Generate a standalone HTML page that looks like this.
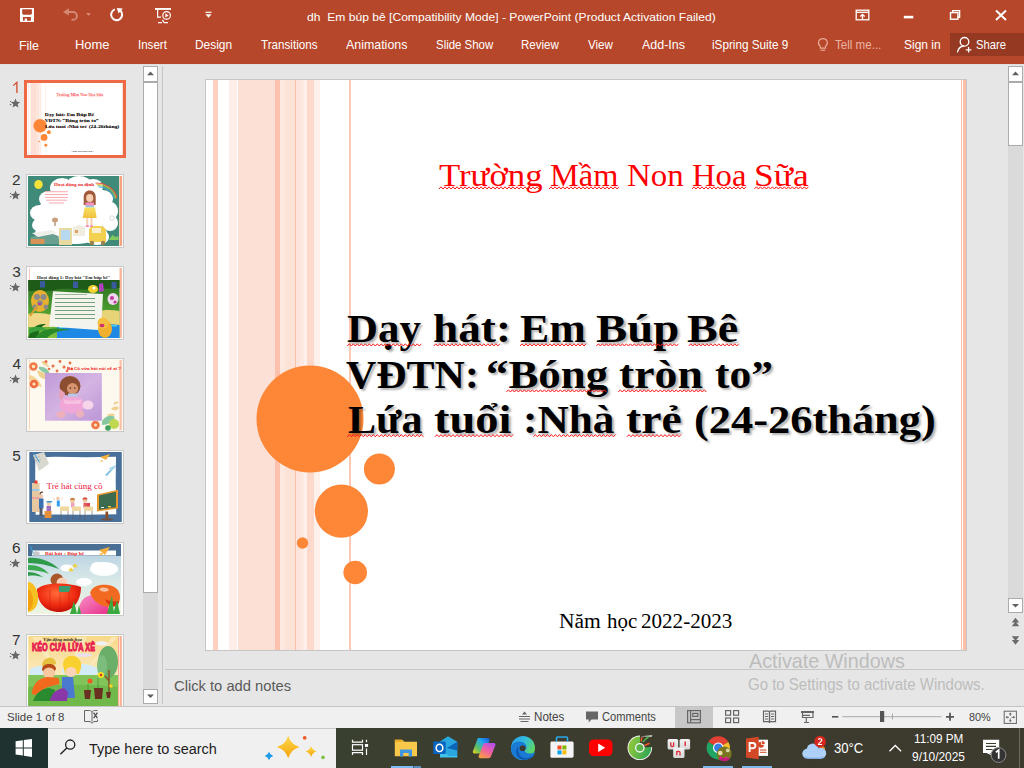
<!DOCTYPE html>
<html><head><meta charset="utf-8">
<style>
*{margin:0;padding:0;box-sizing:border-box}
html,body{width:1024px;height:768px;overflow:hidden;background:#e6e6e6;font-family:"Liberation Sans",sans-serif;position:relative}
.a{position:absolute}
.tx{white-space:nowrap}
</style></head><body>
<div class="a" style="left:0px;top:0px;width:1024px;height:64px;background:#b7472a;"></div>
<div class="a" style="left:950px;top:33px;width:74px;height:23px;background:#963922;"></div>
<div class="a" style="left:0px;top:64px;width:1024px;height:1px;background:#dde1e3;"></div>
<svg class="a" style="left:0;top:0" width="1024" height="64">
<rect x="20" y="7.9" width="14" height="14" rx="0.6" fill="#fff"/>
<path d="M22.2 9.2h9.7v4.3l-1.1 1.2h-7.5l-1.1-1.2z" fill="#b7472a"/>
<path d="M23 17h7.9v3.8h-3.9v-2.2h-2.3v2.2h-1.7z" fill="#b7472a"/>
<g fill="none" stroke="#d38a74" stroke-width="2">
 <path d="M65.5 12h7.5a3.9 3.9 0 0 1 0 7.8h-1.5"/>
</g>
<path d="M63 12l5.9-3.7v7.3z" fill="#d38a74"/>
<path d="M86 13h5l-2.5 3z" fill="#d8866f"/>
<path d="M114.9 9.4A5.5 5.5 0 1 0 120.6 10.8" fill="none" stroke="#fff" stroke-width="2"/>
<path d="M116.8 8.1l6 0.5-4.3 5z" fill="#fff"/>
<rect x="155" y="8" width="16" height="1.9" fill="#fff"/>
<g fill="none" stroke="#fff" stroke-width="1.2">
 <path d="M157.6 9.5v7.6h3.4"/>
 <circle cx="166.6" cy="15.4" r="3.8"/>
 <path d="M158 22.6h4M164 22.6h4"/>
 <path d="M162.5 19.8l1.5 2.8"/>
</g>
<path d="M165.4 13.2v4.4l3.2-2.2z" fill="#fff"/>
<path d="M205.5 12.3h6" stroke="#fff" stroke-width="1.2"/>
<path d="M205.5 14.3h6l-3 3.5z" fill="#fff"/>
<g fill="none" stroke="#fff" stroke-width="1.3">
 <rect x="856.2" y="10.2" width="12.6" height="9.6"/>
 <path d="M856 12.3h13"/>
 <path d="M862.5 19.8v-5.5M860.3 16.5l2.2-2.2 2.2 2.2"/>
</g>
<rect x="903.8" y="15.8" width="9.5" height="2.6" fill="#fff"/>
<g fill="none" stroke="#fff" stroke-width="1.4">
 <rect x="950.5" y="12.6" width="7.4" height="6.6"/>
 <path d="M952.6 12.6v-2h7v6.6h-2"/>
</g>
<path d="M996 10.5l10 9.5M1006 10.5l-10 9.5" stroke="#fff" stroke-width="2"/>
<g fill="none" stroke="#e9a996" stroke-width="1.2">
 <path d="M820.3 46.3c-2.7-2-2.6-7.6 2.6-7.6s5.3 5.6 2.6 7.6v1.8h-5.2z"/>
 <path d="M820.6 50.2h4.6"/>
</g>
<g fill="none" stroke="#fff" stroke-width="1.3">
 <circle cx="964.5" cy="41.8" r="4.3"/>
 <path d="M957.4 52.4c0.8-4.2 3.4-6.2 6.4-6.4"/>
 <path d="M968.6 47v5.6M965.8 49.8h5.6"/>
</g>
</svg>
<div class="a tx" style="left:306.62px;top:10.06px;font-family:'Liberation Sans';font-size:11.38px;line-height:14px;color:#fff;transform:scaleX(1.0633);transform-origin:0 0;">dh  Em búp bê [Compatibility Mode] - PowerPoint (Product Activation Failed)</div>
<div class="a tx" style="left:74.99px;top:38.36px;font-family:'Liberation Sans';font-size:12.52px;line-height:15px;color:#fff;transform:scaleX(1.0345);transform-origin:0 0;">Home</div>
<div class="a tx" style="left:137.60px;top:38.36px;font-family:'Liberation Sans';font-size:12.52px;line-height:15px;color:#fff;transform:scaleX(0.9221);transform-origin:0 0;">Insert</div>
<div class="a tx" style="left:195.07px;top:38.36px;font-family:'Liberation Sans';font-size:12.52px;line-height:15px;color:#fff;transform:scaleX(0.9523);transform-origin:0 0;">Design</div>
<div class="a tx" style="left:260.82px;top:38.36px;font-family:'Liberation Sans';font-size:12.52px;line-height:15px;color:#fff;transform:scaleX(0.9309);transform-origin:0 0;">Transitions</div>
<div class="a tx" style="left:346.00px;top:38.36px;font-family:'Liberation Sans';font-size:12.52px;line-height:15px;color:#fff;transform:scaleX(0.9915);transform-origin:0 0;">Animations</div>
<div class="a tx" style="left:435.64px;top:38.36px;font-family:'Liberation Sans';font-size:12.52px;line-height:15px;color:#fff;transform:scaleX(0.9138);transform-origin:0 0;">Slide Show</div>
<div class="a tx" style="left:521.10px;top:38.36px;font-family:'Liberation Sans';font-size:12.52px;line-height:15px;color:#fff;transform:scaleX(0.9201);transform-origin:0 0;">Review</div>
<div class="a tx" style="left:588.00px;top:38.36px;font-family:'Liberation Sans';font-size:12.52px;line-height:15px;color:#fff;transform:scaleX(0.9241);transform-origin:0 0;">View</div>
<div class="a tx" style="left:642.00px;top:38.36px;font-family:'Liberation Sans';font-size:12.52px;line-height:15px;color:#fff;transform:scaleX(0.9944);transform-origin:0 0;">Add-Ins</div>
<div class="a tx" style="left:712.27px;top:38.36px;font-family:'Liberation Sans';font-size:12.52px;line-height:15px;color:#fff;transform:scaleX(0.9362);transform-origin:0 0;">iSpring Suite 9</div>
<div class="a tx" style="left:903.63px;top:38.36px;font-family:'Liberation Sans';font-size:12.52px;line-height:15px;color:#fff;transform:scaleX(0.9577);transform-origin:0 0;">Sign in</div>
<div class="a tx" style="left:975.75px;top:38.36px;font-family:'Liberation Sans';font-size:12.52px;line-height:15px;color:#fff;transform:scaleX(0.9016);transform-origin:0 0;">Share</div>
<div class="a tx" style="left:19.03px;top:39.16px;font-family:'Liberation Sans';font-size:12.52px;line-height:15px;color:#fff;transform:scaleX(0.9903);transform-origin:0 0;">File</div>
<div class="a tx" style="left:835.32px;top:38.36px;font-family:'Liberation Sans';font-size:12.52px;line-height:15px;color:#ecb3a3;transform:scaleX(0.9252);transform-origin:0 0;">Tell me...</div>
<div class="a" style="left:143px;top:66px;width:15px;height:638px;background:#dadada;"></div>
<div class="a" style="left:143px;top:66px;width:15px;height:16px;background:#fff;border:1px solid #ababab"></div>
<div class="a" style="left:143px;top:81px;width:15px;height:512px;background:#fff;border:1px solid #ababab;border-top-width:2px"></div>
<div class="a" style="left:143px;top:689px;width:15px;height:15px;background:#fff;border:1px solid #ababab"></div>
<div class="a" style="left:162px;top:66px;width:1px;height:638px;background:#c6c6c6;"></div>
<svg class="a" style="left:0;top:0" width="170" height="706">
<path d="M147 75.2h7l-3.5-3.7z" fill="#5f5f5f"/>
<path d="M147 694.5h7l-3.5 3.6z" fill="#5f5f5f"/>
</svg>
<svg class="a" width="0" height="0" style="left:0;top:0"><defs>
<pattern id="sq" width="4" height="3" patternUnits="userSpaceOnUse"><path d="M0 2.5L2 0.5L4 2.5" stroke="#ff2020" fill="none" stroke-width="1"/></pattern>
</defs></svg>
<div class="a" style="left:205px;top:79px;width:762px;height:572px;background:#fff;border:1px solid #c6c6c6"></div>
<div class="a" style="left:206px;top:80px;width:760px;height:570px;overflow:hidden"><div class="a" style="left:7px;top:0px;width:5px;height:570px;background:#fdd0c0;"></div>
<div class="a" style="left:23px;top:0px;width:8px;height:570px;background:#fdeeea;"></div>
<div class="a" style="left:32px;top:0px;width:37px;height:570px;background:#fcdfd5;"></div>
<div class="a" style="left:69px;top:0px;width:5px;height:570px;background:#fdc2ad;"></div>
<div class="a" style="left:74px;top:0px;width:5px;height:570px;background:#fde8e0;"></div>
<div class="a" style="left:79px;top:0px;width:10px;height:570px;background:#fde2d8;"></div>
<div class="a" style="left:89px;top:0px;width:1px;height:570px;background:#fdc0a9;"></div>
<div class="a" style="left:90px;top:0px;width:5px;height:570px;background:#fde4dc;"></div>
<div class="a" style="left:95px;top:0px;width:3px;height:570px;background:#fde8e2;"></div>
<div class="a" style="left:98px;top:0px;width:3px;height:570px;background:#fef0ec;"></div>
<div class="a" style="left:101px;top:0px;width:7px;height:570px;background:#fdd9cc;"></div>
<div class="a" style="left:108px;top:0px;width:6px;height:570px;background:#fef0eb;"></div>
<div class="a" style="left:143px;top:0px;width:2px;height:570px;background:#fdc8b5;"></div>
<div class="a" style="left:755px;top:0px;width:1px;height:570px;background:#fdc0a9;"></div>
<div class="a" style="left:757px;top:0px;width:3px;height:570px;background:#fdbfa8;"></div>
<svg class="a" style="left:0;top:0;overflow:visible" width="760" height="570"><g fill="#fd8637"><circle cx="104" cy="339" r="53.5"/><circle cx="173.4" cy="389" r="15.5"/><circle cx="135.4" cy="431.2" r="26.6"/><circle cx="96.5" cy="463" r="5.7"/><circle cx="149.2" cy="492.5" r="11.8"/></g></svg>
<div class="a tx" style="left:233.26px;top:75.53px;font-family:'Liberation Serif';font-size:32.50px;line-height:39px;color:#ff0000;transform:scaleX(1.0697);transform-origin:0 0;">Trường</div>
<div class="a tx" style="left:343.59px;top:75.53px;font-family:'Liberation Serif';font-size:32.50px;line-height:39px;color:#ff0000;transform:scaleX(0.9956);transform-origin:0 0;">Mầm</div>
<div class="a tx" style="left:420.89px;top:75.53px;font-family:'Liberation Serif';font-size:32.50px;line-height:39px;color:#ff0000;transform:scaleX(1.0115);transform-origin:0 0;">Non</div>
<div class="a tx" style="left:485.79px;top:75.53px;font-family:'Liberation Serif';font-size:32.50px;line-height:39px;color:#ff0000;transform:scaleX(1.0050);transform-origin:0 0;">Hoa</div>
<div class="a tx" style="left:548.09px;top:75.53px;font-family:'Liberation Serif';font-size:32.50px;line-height:39px;color:#ff0000;transform:scaleX(1.0903);transform-origin:0 0;">Sữa</div>
<div class="a tx" style="left:141.13px;top:224.64px;font-family:'Liberation Serif';font-size:39.00px;line-height:47px;color:#000;font-weight:bold;transform:scaleX(1.0998);transform-origin:0 0;text-shadow:2px 2px 2px rgba(0,0,0,.3)">Dạy</div>
<div class="a tx" style="left:227.39px;top:224.64px;font-family:'Liberation Serif';font-size:39.00px;line-height:47px;color:#000;font-weight:bold;transform:scaleX(1.1608);transform-origin:0 0;text-shadow:2px 2px 2px rgba(0,0,0,.3)">hát:</div>
<div class="a tx" style="left:314.01px;top:224.64px;font-family:'Liberation Serif';font-size:39.00px;line-height:47px;color:#000;font-weight:bold;transform:scaleX(1.1248);transform-origin:0 0;text-shadow:2px 2px 2px rgba(0,0,0,.3)">Em</div>
<div class="a tx" style="left:390.27px;top:224.64px;font-family:'Liberation Serif';font-size:39.00px;line-height:47px;color:#000;font-weight:bold;transform:scaleX(1.1979);transform-origin:0 0;text-shadow:2px 2px 2px rgba(0,0,0,.3)">Búp</div>
<div class="a tx" style="left:481.48px;top:224.64px;font-family:'Liberation Serif';font-size:39.00px;line-height:47px;color:#000;font-weight:bold;transform:scaleX(1.1802);transform-origin:0 0;text-shadow:2px 2px 2px rgba(0,0,0,.3)">Bê</div>
<div class="a tx" style="left:140.40px;top:270.54px;font-family:'Liberation Serif';font-size:39.00px;line-height:47px;color:#000;font-weight:bold;transform:scaleX(1.0760);transform-origin:0 0;text-shadow:2px 2px 2px rgba(0,0,0,.3)">VĐTN:</div>
<div class="a tx" style="left:280.10px;top:270.54px;font-family:'Liberation Serif';font-size:39.00px;line-height:47px;color:#000;font-weight:bold;transform:scaleX(1.1507);transform-origin:0 0;text-shadow:2px 2px 2px rgba(0,0,0,.3)">“Bóng</div>
<div class="a tx" style="left:413.38px;top:270.54px;font-family:'Liberation Serif';font-size:39.00px;line-height:47px;color:#000;font-weight:bold;transform:scaleX(1.1742);transform-origin:0 0;text-shadow:2px 2px 2px rgba(0,0,0,.3)">tròn</div>
<div class="a tx" style="left:509.02px;top:270.54px;font-family:'Liberation Serif';font-size:39.00px;line-height:47px;color:#000;font-weight:bold;transform:scaleX(1.1145);transform-origin:0 0;text-shadow:2px 2px 2px rgba(0,0,0,.3)">to”</div>
<div class="a tx" style="left:141.54px;top:316.14px;font-family:'Liberation Serif';font-size:39.00px;line-height:47px;color:#000;font-weight:bold;transform:scaleX(1.0804);transform-origin:0 0;text-shadow:2px 2px 2px rgba(0,0,0,.3)">Lứa</div>
<div class="a tx" style="left:228.47px;top:316.14px;font-family:'Liberation Serif';font-size:39.00px;line-height:47px;color:#000;font-weight:bold;transform:scaleX(1.1920);transform-origin:0 0;text-shadow:2px 2px 2px rgba(0,0,0,.3)">tuổi</div>
<div class="a tx" style="left:316.62px;top:316.14px;font-family:'Liberation Serif';font-size:39.00px;line-height:47px;color:#000;font-weight:bold;transform:scaleX(1.1098);transform-origin:0 0;text-shadow:2px 2px 2px rgba(0,0,0,.3)">:Nhà</div>
<div class="a tx" style="left:420.39px;top:316.14px;font-family:'Liberation Serif';font-size:39.00px;line-height:47px;color:#000;font-weight:bold;transform:scaleX(1.1682);transform-origin:0 0;text-shadow:2px 2px 2px rgba(0,0,0,.3)">trẻ</div>
<div class="a tx" style="left:488.31px;top:316.14px;font-family:'Liberation Serif';font-size:39.00px;line-height:47px;color:#000;font-weight:bold;transform:scaleX(1.1388);transform-origin:0 0;text-shadow:2px 2px 2px rgba(0,0,0,.3)">(24-26tháng)</div>
<div class="a tx" style="left:352.56px;top:528.98px;font-family:'Liberation Serif';font-size:20.50px;line-height:25px;color:#000;transform:scaleX(1.0489);transform-origin:0 0;">Năm</div>
<div class="a tx" style="left:400.60px;top:528.98px;font-family:'Liberation Serif';font-size:20.50px;line-height:25px;color:#000;transform:scaleX(1.0189);transform-origin:0 0;">học</div>
<div class="a tx" style="left:435.14px;top:528.98px;font-family:'Liberation Serif';font-size:20.50px;line-height:25px;color:#000;transform:scaleX(1.0280);transform-origin:0 0;">2022-2023</div>
<svg class="a" style="left:0;top:0;overflow:visible" width="760" height="570"><g fill="none" stroke="#ff1a1a" stroke-width="1"><polyline points="233.0,109.0 235.0,106.8 237.0,109.0 239.0,106.8 241.0,109.0 243.0,106.8 245.0,109.0 247.0,106.8 249.0,109.0 251.0,106.8 253.0,109.0 255.0,106.8 257.0,109.0 259.0,106.8 261.0,109.0 263.0,106.8 265.0,109.0 267.0,106.8 269.0,109.0 271.0,106.8 273.0,109.0 275.0,106.8 277.0,109.0 279.0,106.8 281.0,109.0 283.0,106.8 285.0,109.0 287.0,106.8 289.0,109.0 291.0,106.8 293.0,109.0 295.0,106.8 297.0,109.0 299.0,106.8 301.0,109.0 303.0,106.8 305.0,109.0 307.0,106.8 309.0,109.0 311.0,106.8 313.0,109.0 315.0,106.8 317.0,109.0 319.0,106.8 321.0,109.0 323.0,106.8 325.0,109.0 327.0,106.8 329.0,109.0 331.0,106.8 333.0,109.0"/><polyline points="343.0,109.0 345.0,106.8 347.0,109.0 349.0,106.8 351.0,109.0 353.0,106.8 355.0,109.0 357.0,106.8 359.0,109.0 361.0,106.8 363.0,109.0 365.0,106.8 367.0,109.0 369.0,106.8 371.0,109.0 373.0,106.8 375.0,109.0 377.0,106.8 379.0,109.0 381.0,106.8 383.0,109.0 385.0,106.8 387.0,109.0 389.0,106.8 391.0,109.0 393.0,106.8 395.0,109.0 397.0,106.8 399.0,109.0 401.0,106.8 403.0,109.0 405.0,106.8 407.0,109.0 409.0,106.8 411.0,109.0 413.0,106.8"/><polyline points="486.0,109.0 488.0,106.8 490.0,109.0 492.0,106.8 494.0,109.0 496.0,106.8 498.0,109.0 500.0,106.8 502.0,109.0 504.0,106.8 506.0,109.0 508.0,106.8 510.0,109.0 512.0,106.8 514.0,109.0 516.0,106.8 518.0,109.0 520.0,106.8 522.0,109.0 524.0,106.8 526.0,109.0 528.0,106.8 530.0,109.0 532.0,106.8 534.0,109.0 536.0,106.8 538.0,109.0 540.0,106.8"/><polyline points="548.4,109.0 550.4,106.8 552.4,109.0 554.4,106.8 556.4,109.0 558.4,106.8 560.4,109.0 562.4,106.8 564.4,109.0 566.4,106.8 568.4,109.0 570.4,106.8 572.4,109.0 574.4,106.8 576.4,109.0 578.4,106.8 580.4,109.0 582.4,106.8 584.4,109.0 586.4,106.8 588.4,109.0 590.4,106.8 592.4,109.0 594.4,106.8 596.4,109.0 598.4,106.8 600.4,109.0 602.4,106.8"/><polyline points="141.3,266.0 143.3,263.8 145.3,266.0 147.3,263.8 149.3,266.0 151.3,263.8 153.3,266.0 155.3,263.8 157.3,266.0 159.3,263.8 161.3,266.0 163.3,263.8 165.3,266.0 167.3,263.8 169.3,266.0 171.3,263.8 173.3,266.0 175.3,263.8 177.3,266.0 179.3,263.8 181.3,266.0 183.3,263.8 185.3,266.0 187.3,263.8 189.3,266.0 191.3,263.8 193.3,266.0 195.3,263.8 197.3,266.0 199.3,263.8 201.3,266.0 203.3,263.8 205.3,266.0 207.3,263.8 209.3,266.0 211.3,263.8 213.3,266.0 215.3,263.8"/><polyline points="227.8,266.0 229.8,263.8 231.8,266.0 233.8,263.8 235.8,266.0 237.8,263.8 239.8,266.0 241.8,263.8 243.8,266.0 245.8,263.8 247.8,266.0 249.8,263.8 251.8,266.0 253.8,263.8 255.8,266.0 257.8,263.8 259.8,266.0 261.8,263.8 263.8,266.0 265.8,263.8 267.8,266.0 269.8,263.8 271.8,266.0 273.8,263.8 275.8,266.0 277.8,263.8 279.8,266.0 281.8,263.8 283.8,266.0 285.8,263.8 287.8,266.0 289.8,263.8 291.8,266.0 293.8,263.8"/><polyline points="314.0,266.0 316.0,263.8 318.0,266.0 320.0,263.8 322.0,266.0 324.0,263.8 326.0,266.0 328.0,263.8 330.0,266.0 332.0,263.8 334.0,266.0 336.0,263.8 338.0,266.0 340.0,263.8 342.0,266.0 344.0,263.8 346.0,266.0 348.0,263.8 350.0,266.0 352.0,263.8 354.0,266.0 356.0,263.8 358.0,266.0 360.0,263.8 362.0,266.0 364.0,263.8 366.0,266.0 368.0,263.8 370.0,266.0 372.0,263.8 374.0,266.0 376.0,263.8 378.0,266.0 380.0,263.8"/><polyline points="390.4,266.0 392.4,263.8 394.4,266.0 396.4,263.8 398.4,266.0 400.4,263.8 402.4,266.0 404.4,263.8 406.4,266.0 408.4,263.8 410.4,266.0 412.4,263.8 414.4,266.0 416.4,263.8 418.4,266.0 420.4,263.8 422.4,266.0 424.4,263.8 426.4,266.0 428.4,263.8 430.4,266.0 432.4,263.8 434.4,266.0 436.4,263.8 438.4,266.0 440.4,263.8 442.4,266.0 444.4,263.8 446.4,266.0 448.4,263.8 450.4,266.0 452.4,263.8 454.4,266.0 456.4,263.8 458.4,266.0 460.4,263.8 462.4,266.0 464.4,263.8 466.4,266.0 468.4,263.8 470.4,266.0 472.4,263.8"/><polyline points="482.8,266.0 484.8,263.8 486.8,266.0 488.8,263.8 490.8,266.0 492.8,263.8 494.8,266.0 496.8,263.8 498.8,266.0 500.8,263.8 502.8,266.0 504.8,263.8 506.8,266.0 508.8,263.8 510.8,266.0 512.8,263.8 514.8,266.0 516.8,263.8 518.8,266.0 520.8,263.8 522.8,266.0 524.8,263.8 526.8,266.0 528.8,263.8 530.8,266.0 532.8,263.8"/><polyline points="300.4,312.0 302.4,309.8 304.4,312.0 306.4,309.8 308.4,312.0 310.4,309.8 312.4,312.0 314.4,309.8 316.4,312.0 318.4,309.8 320.4,312.0 322.4,309.8 324.4,312.0 326.4,309.8 328.4,312.0 330.4,309.8 332.4,312.0 334.4,309.8 336.4,312.0 338.4,309.8 340.4,312.0 342.4,309.8 344.4,312.0 346.4,309.8 348.4,312.0 350.4,309.8 352.4,312.0 354.4,309.8 356.4,312.0 358.4,309.8 360.4,312.0 362.4,309.8 364.4,312.0 366.4,309.8 368.4,312.0 370.4,309.8 372.4,312.0 374.4,309.8 376.4,312.0 378.4,309.8 380.4,312.0 382.4,309.8 384.4,312.0 386.4,309.8 388.4,312.0 390.4,309.8 392.4,312.0 394.4,309.8 396.4,312.0 398.4,309.8 400.4,312.0"/><polyline points="412.3,312.0 414.3,309.8 416.3,312.0 418.3,309.8 420.3,312.0 422.3,309.8 424.3,312.0 426.3,309.8 428.3,312.0 430.3,309.8 432.3,312.0 434.3,309.8 436.3,312.0 438.3,309.8 440.3,312.0 442.3,309.8 444.3,312.0 446.3,309.8 448.3,312.0 450.3,309.8 452.3,312.0 454.3,309.8 456.3,312.0 458.3,309.8 460.3,312.0 462.3,309.8 464.3,312.0 466.3,309.8 468.3,312.0 470.3,309.8 472.3,312.0 474.3,309.8 476.3,312.0 478.3,309.8 480.3,312.0 482.3,309.8 484.3,312.0 486.3,309.8 488.3,312.0 490.3,309.8 492.3,312.0 494.3,309.8 496.3,312.0 498.3,309.8 500.3,312.0"/><polyline points="141.3,356.8 143.3,354.6 145.3,356.8 147.3,354.6 149.3,356.8 151.3,354.6 153.3,356.8 155.3,354.6 157.3,356.8 159.3,354.6 161.3,356.8 163.3,354.6 165.3,356.8 167.3,354.6 169.3,356.8 171.3,354.6 173.3,356.8 175.3,354.6 177.3,356.8 179.3,354.6 181.3,356.8 183.3,354.6 185.3,356.8 187.3,354.6 189.3,356.8 191.3,354.6 193.3,356.8 195.3,354.6 197.3,356.8 199.3,354.6 201.3,356.8 203.3,354.6 205.3,356.8 207.3,354.6 209.3,356.8 211.3,354.6 213.3,356.8 215.3,354.6 217.3,356.8"/><polyline points="229.0,356.8 231.0,354.6 233.0,356.8 235.0,354.6 237.0,356.8 239.0,354.6 241.0,356.8 243.0,354.6 245.0,356.8 247.0,354.6 249.0,356.8 251.0,354.6 253.0,356.8 255.0,354.6 257.0,356.8 259.0,354.6 261.0,356.8 263.0,354.6 265.0,356.8 267.0,354.6 269.0,356.8 271.0,354.6 273.0,356.8 275.0,354.6 277.0,356.8 279.0,354.6 281.0,356.8 283.0,354.6 285.0,356.8 287.0,354.6 289.0,356.8 291.0,354.6 293.0,356.8 295.0,354.6 297.0,356.8 299.0,354.6 301.0,356.8 303.0,354.6 305.0,356.8 307.0,354.6"/><polyline points="327.4,356.8 329.4,354.6 331.4,356.8 333.4,354.6 335.4,356.8 337.4,354.6 339.4,356.8 341.4,354.6 343.4,356.8 345.4,354.6 347.4,356.8 349.4,354.6 351.4,356.8 353.4,354.6 355.4,356.8 357.4,354.6 359.4,356.8 361.4,354.6 363.4,356.8 365.4,354.6 367.4,356.8 369.4,354.6 371.4,356.8 373.4,354.6 375.4,356.8 377.4,354.6 379.4,356.8 381.4,354.6 383.4,356.8 385.4,354.6 387.4,356.8 389.4,354.6 391.4,356.8 393.4,354.6 395.4,356.8 397.4,354.6 399.4,356.8 401.4,354.6 403.4,356.8 405.4,354.6 407.4,356.8 409.4,354.6"/><polyline points="421.0,356.8 423.0,354.6 425.0,356.8 427.0,354.6 429.0,356.8 431.0,354.6 433.0,356.8 435.0,354.6 437.0,356.8 439.0,354.6 441.0,356.8 443.0,354.6 445.0,356.8 447.0,354.6 449.0,356.8 451.0,354.6 453.0,356.8 455.0,354.6 457.0,356.8 459.0,354.6 461.0,356.8 463.0,354.6 465.0,356.8 467.0,354.6 469.0,356.8 471.0,354.6 473.0,356.8 475.0,354.6"/></g></svg></div>
<div class="a" style="left:1008px;top:66px;width:15px;height:533px;background:#dadada;"></div>
<div class="a" style="left:1008px;top:66px;width:15px;height:16px;background:#fff;border:1px solid #ababab"></div>
<div class="a" style="left:1008px;top:81px;width:15px;height:65px;background:#fff;border:1px solid #ababab;border-top-width:2px"></div>
<div class="a" style="left:1008px;top:598px;width:15px;height:15px;background:#fff;border:1px solid #ababab"></div>
<svg class="a" style="left:1000px;top:60px" width="24" height="600">
<path d="M12 15.2h7l-3.5-3.7z" fill="#5f5f5f"/>
<path d="M12 544h7l-3.5 3.6z" fill="#5f5f5f"/>
<path d="M11.8 562.5h7.4l-3.7-4.8zM11.8 566.2h7.4l-3.7-4.8z" fill="#6a6a6a"/>
<path d="M11.8 576.3h7.4l-3.7 4.8zM11.8 580h7.4l-3.7 4.8z" fill="#6a6a6a"/>
</svg>
<div class="a" style="left:165px;top:669px;width:859px;height:1px;background:#c6c6c6;"></div>
<div class="a tx" style="left:174.11px;top:676.63px;font-family:'Liberation Sans';font-size:14.93px;line-height:18px;color:#5a5a5a;transform:scaleX(0.9878);transform-origin:0 0;">Click to add notes</div>
<div class="a tx" style="left:748.70px;top:650.45px;font-family:'Liberation Sans';font-size:19.48px;line-height:23px;color:#bdbdbd;transform:scaleX(1.0140);transform-origin:0 0;">Activate Windows</div>
<div class="a tx" style="left:748.00px;top:675.08px;font-family:'Liberation Sans';font-size:15.64px;line-height:19px;color:#bdbdbd;transform:scaleX(0.9600);transform-origin:0 0;">Go to Settings to activate Windows.</div>
<svg class="a" style="left:0;top:76px" width="24" height="20"><path d="M13.2 9.6L16.9 6.4V17" fill="none" stroke="#d24726" stroke-width="1.25"/></svg>
<svg class="a" style="left:0;top:82px" width="24" height="30"><polygon points="15.50,16.60 16.82,19.68 20.16,19.99 17.64,22.20 18.38,25.46 15.50,23.75 12.62,25.46 13.36,22.20 10.84,19.99 14.18,19.68" fill="#666"/><rect x="10" y="19" width="1.1" height="1" fill="#666"/><rect x="9.8" y="22.2" width="1.6" height="1" fill="#666"/></svg>
<div class="a" style="left:24px;top:80px;width:102px;height:78px;background:#ef6944;"></div>
<div class="a" style="left:27px;top:83px;width:96px;height:72px;background:#fff;overflow:hidden"><div class="a" style="left:0;top:0;width:760px;height:570px;transform:scale(0.12632);transform-origin:0 0"><div class="a" style="left:7px;top:0px;width:5px;height:570px;background:#fdd0c0;"></div>
<div class="a" style="left:23px;top:0px;width:8px;height:570px;background:#fdeeea;"></div>
<div class="a" style="left:32px;top:0px;width:37px;height:570px;background:#fcdfd5;"></div>
<div class="a" style="left:69px;top:0px;width:5px;height:570px;background:#fdc2ad;"></div>
<div class="a" style="left:74px;top:0px;width:5px;height:570px;background:#fde8e0;"></div>
<div class="a" style="left:79px;top:0px;width:10px;height:570px;background:#fde2d8;"></div>
<div class="a" style="left:89px;top:0px;width:1px;height:570px;background:#fdc0a9;"></div>
<div class="a" style="left:90px;top:0px;width:5px;height:570px;background:#fde4dc;"></div>
<div class="a" style="left:95px;top:0px;width:3px;height:570px;background:#fde8e2;"></div>
<div class="a" style="left:98px;top:0px;width:3px;height:570px;background:#fef0ec;"></div>
<div class="a" style="left:101px;top:0px;width:7px;height:570px;background:#fdd9cc;"></div>
<div class="a" style="left:108px;top:0px;width:6px;height:570px;background:#fef0eb;"></div>
<div class="a" style="left:143px;top:0px;width:2px;height:570px;background:#fdc8b5;"></div>
<div class="a" style="left:755px;top:0px;width:1px;height:570px;background:#fdc0a9;"></div>
<div class="a" style="left:757px;top:0px;width:3px;height:570px;background:#fdbfa8;"></div>
<svg class="a" style="left:0;top:0;overflow:visible" width="760" height="570"><g fill="#fd8637"><circle cx="104" cy="339" r="53.5"/><circle cx="173.4" cy="389" r="15.5"/><circle cx="135.4" cy="431.2" r="26.6"/><circle cx="96.5" cy="463" r="5.7"/><circle cx="149.2" cy="492.5" r="11.8"/></g></svg>
<div class="a tx" style="left:233.26px;top:75.53px;font-family:'Liberation Serif';font-size:32.50px;line-height:39px;color:#ff0000;transform:scaleX(1.0697);transform-origin:0 0;">Trường</div>
<div class="a tx" style="left:343.59px;top:75.53px;font-family:'Liberation Serif';font-size:32.50px;line-height:39px;color:#ff0000;transform:scaleX(0.9956);transform-origin:0 0;">Mầm</div>
<div class="a tx" style="left:420.89px;top:75.53px;font-family:'Liberation Serif';font-size:32.50px;line-height:39px;color:#ff0000;transform:scaleX(1.0115);transform-origin:0 0;">Non</div>
<div class="a tx" style="left:485.79px;top:75.53px;font-family:'Liberation Serif';font-size:32.50px;line-height:39px;color:#ff0000;transform:scaleX(1.0050);transform-origin:0 0;">Hoa</div>
<div class="a tx" style="left:548.09px;top:75.53px;font-family:'Liberation Serif';font-size:32.50px;line-height:39px;color:#ff0000;transform:scaleX(1.0903);transform-origin:0 0;">Sữa</div>
<div class="a tx" style="left:141.13px;top:224.64px;font-family:'Liberation Serif';font-size:39.00px;line-height:47px;color:#000;font-weight:bold;transform:scaleX(1.0998);transform-origin:0 0;text-shadow:2px 2px 2px rgba(0,0,0,.3)">Dạy</div>
<div class="a tx" style="left:227.39px;top:224.64px;font-family:'Liberation Serif';font-size:39.00px;line-height:47px;color:#000;font-weight:bold;transform:scaleX(1.1608);transform-origin:0 0;text-shadow:2px 2px 2px rgba(0,0,0,.3)">hát:</div>
<div class="a tx" style="left:314.01px;top:224.64px;font-family:'Liberation Serif';font-size:39.00px;line-height:47px;color:#000;font-weight:bold;transform:scaleX(1.1248);transform-origin:0 0;text-shadow:2px 2px 2px rgba(0,0,0,.3)">Em</div>
<div class="a tx" style="left:390.27px;top:224.64px;font-family:'Liberation Serif';font-size:39.00px;line-height:47px;color:#000;font-weight:bold;transform:scaleX(1.1979);transform-origin:0 0;text-shadow:2px 2px 2px rgba(0,0,0,.3)">Búp</div>
<div class="a tx" style="left:481.48px;top:224.64px;font-family:'Liberation Serif';font-size:39.00px;line-height:47px;color:#000;font-weight:bold;transform:scaleX(1.1802);transform-origin:0 0;text-shadow:2px 2px 2px rgba(0,0,0,.3)">Bê</div>
<div class="a tx" style="left:140.40px;top:270.54px;font-family:'Liberation Serif';font-size:39.00px;line-height:47px;color:#000;font-weight:bold;transform:scaleX(1.0760);transform-origin:0 0;text-shadow:2px 2px 2px rgba(0,0,0,.3)">VĐTN:</div>
<div class="a tx" style="left:280.10px;top:270.54px;font-family:'Liberation Serif';font-size:39.00px;line-height:47px;color:#000;font-weight:bold;transform:scaleX(1.1507);transform-origin:0 0;text-shadow:2px 2px 2px rgba(0,0,0,.3)">“Bóng</div>
<div class="a tx" style="left:413.38px;top:270.54px;font-family:'Liberation Serif';font-size:39.00px;line-height:47px;color:#000;font-weight:bold;transform:scaleX(1.1742);transform-origin:0 0;text-shadow:2px 2px 2px rgba(0,0,0,.3)">tròn</div>
<div class="a tx" style="left:509.02px;top:270.54px;font-family:'Liberation Serif';font-size:39.00px;line-height:47px;color:#000;font-weight:bold;transform:scaleX(1.1145);transform-origin:0 0;text-shadow:2px 2px 2px rgba(0,0,0,.3)">to”</div>
<div class="a tx" style="left:141.54px;top:316.14px;font-family:'Liberation Serif';font-size:39.00px;line-height:47px;color:#000;font-weight:bold;transform:scaleX(1.0804);transform-origin:0 0;text-shadow:2px 2px 2px rgba(0,0,0,.3)">Lứa</div>
<div class="a tx" style="left:228.47px;top:316.14px;font-family:'Liberation Serif';font-size:39.00px;line-height:47px;color:#000;font-weight:bold;transform:scaleX(1.1920);transform-origin:0 0;text-shadow:2px 2px 2px rgba(0,0,0,.3)">tuổi</div>
<div class="a tx" style="left:316.62px;top:316.14px;font-family:'Liberation Serif';font-size:39.00px;line-height:47px;color:#000;font-weight:bold;transform:scaleX(1.1098);transform-origin:0 0;text-shadow:2px 2px 2px rgba(0,0,0,.3)">:Nhà</div>
<div class="a tx" style="left:420.39px;top:316.14px;font-family:'Liberation Serif';font-size:39.00px;line-height:47px;color:#000;font-weight:bold;transform:scaleX(1.1682);transform-origin:0 0;text-shadow:2px 2px 2px rgba(0,0,0,.3)">trẻ</div>
<div class="a tx" style="left:488.31px;top:316.14px;font-family:'Liberation Serif';font-size:39.00px;line-height:47px;color:#000;font-weight:bold;transform:scaleX(1.1388);transform-origin:0 0;text-shadow:2px 2px 2px rgba(0,0,0,.3)">(24-26tháng)</div>
<div class="a tx" style="left:352.56px;top:528.98px;font-family:'Liberation Serif';font-size:20.50px;line-height:25px;color:#000;transform:scaleX(1.0489);transform-origin:0 0;">Năm</div>
<div class="a tx" style="left:400.60px;top:528.98px;font-family:'Liberation Serif';font-size:20.50px;line-height:25px;color:#000;transform:scaleX(1.0189);transform-origin:0 0;">học</div>
<div class="a tx" style="left:435.14px;top:528.98px;font-family:'Liberation Serif';font-size:20.50px;line-height:25px;color:#000;transform:scaleX(1.0280);transform-origin:0 0;">2022-2023</div>
<svg class="a" style="left:0;top:0;overflow:visible" width="760" height="570"><g fill="none" stroke="#ff1a1a" stroke-width="1"><polyline points="233.0,109.0 235.0,106.8 237.0,109.0 239.0,106.8 241.0,109.0 243.0,106.8 245.0,109.0 247.0,106.8 249.0,109.0 251.0,106.8 253.0,109.0 255.0,106.8 257.0,109.0 259.0,106.8 261.0,109.0 263.0,106.8 265.0,109.0 267.0,106.8 269.0,109.0 271.0,106.8 273.0,109.0 275.0,106.8 277.0,109.0 279.0,106.8 281.0,109.0 283.0,106.8 285.0,109.0 287.0,106.8 289.0,109.0 291.0,106.8 293.0,109.0 295.0,106.8 297.0,109.0 299.0,106.8 301.0,109.0 303.0,106.8 305.0,109.0 307.0,106.8 309.0,109.0 311.0,106.8 313.0,109.0 315.0,106.8 317.0,109.0 319.0,106.8 321.0,109.0 323.0,106.8 325.0,109.0 327.0,106.8 329.0,109.0 331.0,106.8 333.0,109.0"/><polyline points="343.0,109.0 345.0,106.8 347.0,109.0 349.0,106.8 351.0,109.0 353.0,106.8 355.0,109.0 357.0,106.8 359.0,109.0 361.0,106.8 363.0,109.0 365.0,106.8 367.0,109.0 369.0,106.8 371.0,109.0 373.0,106.8 375.0,109.0 377.0,106.8 379.0,109.0 381.0,106.8 383.0,109.0 385.0,106.8 387.0,109.0 389.0,106.8 391.0,109.0 393.0,106.8 395.0,109.0 397.0,106.8 399.0,109.0 401.0,106.8 403.0,109.0 405.0,106.8 407.0,109.0 409.0,106.8 411.0,109.0 413.0,106.8"/><polyline points="486.0,109.0 488.0,106.8 490.0,109.0 492.0,106.8 494.0,109.0 496.0,106.8 498.0,109.0 500.0,106.8 502.0,109.0 504.0,106.8 506.0,109.0 508.0,106.8 510.0,109.0 512.0,106.8 514.0,109.0 516.0,106.8 518.0,109.0 520.0,106.8 522.0,109.0 524.0,106.8 526.0,109.0 528.0,106.8 530.0,109.0 532.0,106.8 534.0,109.0 536.0,106.8 538.0,109.0 540.0,106.8"/><polyline points="548.4,109.0 550.4,106.8 552.4,109.0 554.4,106.8 556.4,109.0 558.4,106.8 560.4,109.0 562.4,106.8 564.4,109.0 566.4,106.8 568.4,109.0 570.4,106.8 572.4,109.0 574.4,106.8 576.4,109.0 578.4,106.8 580.4,109.0 582.4,106.8 584.4,109.0 586.4,106.8 588.4,109.0 590.4,106.8 592.4,109.0 594.4,106.8 596.4,109.0 598.4,106.8 600.4,109.0 602.4,106.8"/><polyline points="141.3,266.0 143.3,263.8 145.3,266.0 147.3,263.8 149.3,266.0 151.3,263.8 153.3,266.0 155.3,263.8 157.3,266.0 159.3,263.8 161.3,266.0 163.3,263.8 165.3,266.0 167.3,263.8 169.3,266.0 171.3,263.8 173.3,266.0 175.3,263.8 177.3,266.0 179.3,263.8 181.3,266.0 183.3,263.8 185.3,266.0 187.3,263.8 189.3,266.0 191.3,263.8 193.3,266.0 195.3,263.8 197.3,266.0 199.3,263.8 201.3,266.0 203.3,263.8 205.3,266.0 207.3,263.8 209.3,266.0 211.3,263.8 213.3,266.0 215.3,263.8"/><polyline points="227.8,266.0 229.8,263.8 231.8,266.0 233.8,263.8 235.8,266.0 237.8,263.8 239.8,266.0 241.8,263.8 243.8,266.0 245.8,263.8 247.8,266.0 249.8,263.8 251.8,266.0 253.8,263.8 255.8,266.0 257.8,263.8 259.8,266.0 261.8,263.8 263.8,266.0 265.8,263.8 267.8,266.0 269.8,263.8 271.8,266.0 273.8,263.8 275.8,266.0 277.8,263.8 279.8,266.0 281.8,263.8 283.8,266.0 285.8,263.8 287.8,266.0 289.8,263.8 291.8,266.0 293.8,263.8"/><polyline points="314.0,266.0 316.0,263.8 318.0,266.0 320.0,263.8 322.0,266.0 324.0,263.8 326.0,266.0 328.0,263.8 330.0,266.0 332.0,263.8 334.0,266.0 336.0,263.8 338.0,266.0 340.0,263.8 342.0,266.0 344.0,263.8 346.0,266.0 348.0,263.8 350.0,266.0 352.0,263.8 354.0,266.0 356.0,263.8 358.0,266.0 360.0,263.8 362.0,266.0 364.0,263.8 366.0,266.0 368.0,263.8 370.0,266.0 372.0,263.8 374.0,266.0 376.0,263.8 378.0,266.0 380.0,263.8"/><polyline points="390.4,266.0 392.4,263.8 394.4,266.0 396.4,263.8 398.4,266.0 400.4,263.8 402.4,266.0 404.4,263.8 406.4,266.0 408.4,263.8 410.4,266.0 412.4,263.8 414.4,266.0 416.4,263.8 418.4,266.0 420.4,263.8 422.4,266.0 424.4,263.8 426.4,266.0 428.4,263.8 430.4,266.0 432.4,263.8 434.4,266.0 436.4,263.8 438.4,266.0 440.4,263.8 442.4,266.0 444.4,263.8 446.4,266.0 448.4,263.8 450.4,266.0 452.4,263.8 454.4,266.0 456.4,263.8 458.4,266.0 460.4,263.8 462.4,266.0 464.4,263.8 466.4,266.0 468.4,263.8 470.4,266.0 472.4,263.8"/><polyline points="482.8,266.0 484.8,263.8 486.8,266.0 488.8,263.8 490.8,266.0 492.8,263.8 494.8,266.0 496.8,263.8 498.8,266.0 500.8,263.8 502.8,266.0 504.8,263.8 506.8,266.0 508.8,263.8 510.8,266.0 512.8,263.8 514.8,266.0 516.8,263.8 518.8,266.0 520.8,263.8 522.8,266.0 524.8,263.8 526.8,266.0 528.8,263.8 530.8,266.0 532.8,263.8"/><polyline points="300.4,312.0 302.4,309.8 304.4,312.0 306.4,309.8 308.4,312.0 310.4,309.8 312.4,312.0 314.4,309.8 316.4,312.0 318.4,309.8 320.4,312.0 322.4,309.8 324.4,312.0 326.4,309.8 328.4,312.0 330.4,309.8 332.4,312.0 334.4,309.8 336.4,312.0 338.4,309.8 340.4,312.0 342.4,309.8 344.4,312.0 346.4,309.8 348.4,312.0 350.4,309.8 352.4,312.0 354.4,309.8 356.4,312.0 358.4,309.8 360.4,312.0 362.4,309.8 364.4,312.0 366.4,309.8 368.4,312.0 370.4,309.8 372.4,312.0 374.4,309.8 376.4,312.0 378.4,309.8 380.4,312.0 382.4,309.8 384.4,312.0 386.4,309.8 388.4,312.0 390.4,309.8 392.4,312.0 394.4,309.8 396.4,312.0 398.4,309.8 400.4,312.0"/><polyline points="412.3,312.0 414.3,309.8 416.3,312.0 418.3,309.8 420.3,312.0 422.3,309.8 424.3,312.0 426.3,309.8 428.3,312.0 430.3,309.8 432.3,312.0 434.3,309.8 436.3,312.0 438.3,309.8 440.3,312.0 442.3,309.8 444.3,312.0 446.3,309.8 448.3,312.0 450.3,309.8 452.3,312.0 454.3,309.8 456.3,312.0 458.3,309.8 460.3,312.0 462.3,309.8 464.3,312.0 466.3,309.8 468.3,312.0 470.3,309.8 472.3,312.0 474.3,309.8 476.3,312.0 478.3,309.8 480.3,312.0 482.3,309.8 484.3,312.0 486.3,309.8 488.3,312.0 490.3,309.8 492.3,312.0 494.3,309.8 496.3,312.0 498.3,309.8 500.3,312.0"/><polyline points="141.3,356.8 143.3,354.6 145.3,356.8 147.3,354.6 149.3,356.8 151.3,354.6 153.3,356.8 155.3,354.6 157.3,356.8 159.3,354.6 161.3,356.8 163.3,354.6 165.3,356.8 167.3,354.6 169.3,356.8 171.3,354.6 173.3,356.8 175.3,354.6 177.3,356.8 179.3,354.6 181.3,356.8 183.3,354.6 185.3,356.8 187.3,354.6 189.3,356.8 191.3,354.6 193.3,356.8 195.3,354.6 197.3,356.8 199.3,354.6 201.3,356.8 203.3,354.6 205.3,356.8 207.3,354.6 209.3,356.8 211.3,354.6 213.3,356.8 215.3,354.6 217.3,356.8"/><polyline points="229.0,356.8 231.0,354.6 233.0,356.8 235.0,354.6 237.0,356.8 239.0,354.6 241.0,356.8 243.0,354.6 245.0,356.8 247.0,354.6 249.0,356.8 251.0,354.6 253.0,356.8 255.0,354.6 257.0,356.8 259.0,354.6 261.0,356.8 263.0,354.6 265.0,356.8 267.0,354.6 269.0,356.8 271.0,354.6 273.0,356.8 275.0,354.6 277.0,356.8 279.0,354.6 281.0,356.8 283.0,354.6 285.0,356.8 287.0,354.6 289.0,356.8 291.0,354.6 293.0,356.8 295.0,354.6 297.0,356.8 299.0,354.6 301.0,356.8 303.0,354.6 305.0,356.8 307.0,354.6"/><polyline points="327.4,356.8 329.4,354.6 331.4,356.8 333.4,354.6 335.4,356.8 337.4,354.6 339.4,356.8 341.4,354.6 343.4,356.8 345.4,354.6 347.4,356.8 349.4,354.6 351.4,356.8 353.4,354.6 355.4,356.8 357.4,354.6 359.4,356.8 361.4,354.6 363.4,356.8 365.4,354.6 367.4,356.8 369.4,354.6 371.4,356.8 373.4,354.6 375.4,356.8 377.4,354.6 379.4,356.8 381.4,354.6 383.4,356.8 385.4,354.6 387.4,356.8 389.4,354.6 391.4,356.8 393.4,354.6 395.4,356.8 397.4,354.6 399.4,356.8 401.4,354.6 403.4,356.8 405.4,354.6 407.4,356.8 409.4,354.6"/><polyline points="421.0,356.8 423.0,354.6 425.0,356.8 427.0,354.6 429.0,356.8 431.0,354.6 433.0,356.8 435.0,354.6 437.0,356.8 439.0,354.6 441.0,356.8 443.0,354.6 445.0,356.8 447.0,354.6 449.0,356.8 451.0,354.6 453.0,356.8 455.0,354.6 457.0,356.8 459.0,354.6 461.0,356.8 463.0,354.6 465.0,356.8 467.0,354.6 469.0,356.8 471.0,354.6 473.0,356.8 475.0,354.6"/></g></svg></div></div>
<div class="a tx" style="left:12.08px;top:170.88px;font-family:'Liberation Sans';font-size:15.36px;line-height:18px;color:#333;">2</div>
<svg class="a" style="left:0;top:174px" width="24" height="30"><polygon points="15.50,16.60 16.82,19.68 20.16,19.99 17.64,22.20 18.38,25.46 15.50,23.75 12.62,25.46 13.36,22.20 10.84,19.99 14.18,19.68" fill="#666"/><rect x="10" y="19" width="1.1" height="1" fill="#666"/><rect x="9.8" y="22.2" width="1.6" height="1" fill="#666"/></svg>
<div class="a" style="left:26px;top:174px;width:98px;height:74px;background:#fff;border:1px solid #c8c8c8"></div>
<svg class="a" style="left:27px;top:175px" width="96" height="72" viewBox="0 0 96 72">
<defs><linearGradient id="dr2" x1="0" y1="0" x2="0" y2="1"><stop offset="0" stop-color="#f8e060"/><stop offset="1" stop-color="#f0c040"/></linearGradient></defs>
<rect x="0" y="0" width="96" height="72" fill="#fff"/>
<rect x="1" y="1" width="91" height="70" fill="#3f8a78"/>
<rect x="92.5" y="1" width="2.6" height="70" fill="#f7a27e"/>
<g fill="#fff">
 <ellipse cx="35" cy="13" rx="12" ry="10"/><ellipse cx="52" cy="9" rx="12" ry="8"/><ellipse cx="66" cy="12" rx="10" ry="8"/>
 <ellipse cx="22" cy="24" rx="10" ry="8"/><ellipse cx="76" cy="24" rx="10" ry="9"/><ellipse cx="84" cy="36" rx="7" ry="9"/>
 <ellipse cx="13" cy="38" rx="10" ry="8"/><ellipse cx="48" cy="36" rx="36" ry="24"/><ellipse cx="83" cy="48" rx="8" ry="8"/>
 <ellipse cx="14" cy="50" rx="9" ry="7"/><ellipse cx="44" cy="58" rx="36" ry="11"/><ellipse cx="70" cy="62" rx="12" ry="8"/>
</g>
<path d="M1 1h22c-6 3-9 8-8 14c-6 1-10 5-11 9l-3 0z" fill="#3f8a78"/>
<ellipse cx="11.5" cy="9.5" rx="4.2" ry="4.6" fill="#f6e23a"/>
<path d="M6 6c-2 1-2 5 0 6M17 6c2 1 2 5 0 6" stroke="#5a7a50" stroke-width="0.6" fill="none"/>
<path d="M68.5 8a20 18 0 0 1 21.5 15" fill="none" stroke="#f04a3a" stroke-width="0.9"/>
<path d="M69.5 9.3a18.5 16.5 0 0 1 19.5 14" fill="none" stroke="#f6b83a" stroke-width="0.9"/>
<path d="M70.5 10.6a17 15 0 0 1 17.5 13" fill="none" stroke="#70c060" stroke-width="0.9"/>
<path d="M71.5 11.9a15.5 13.5 0 0 1 15.5 12" fill="none" stroke="#50a8e8" stroke-width="0.9"/>
<text x="27" y="11.3" font-family="Liberation Serif" font-weight="bold" font-size="4.6" fill="#e81818" textLength="40" lengthAdjust="spacingAndGlyphs">Hoạt động ổn định</text>
<g fill="#f5a0a8"><rect x="18" y="16.3" width="23" height="0.9"/><rect x="18" y="19.1" width="23" height="0.9"/><rect x="18" y="21.9" width="23" height="0.9"/><rect x="19" y="24.7" width="21" height="0.9"/><rect x="22" y="27.5" width="15" height="0.9"/></g>
<path d="M56.7 22c0-4 2.5-6.5 6-6.5s6 2.5 6 6.5v8h-12z" fill="#a05a3a"/>
<ellipse cx="62.7" cy="23" rx="3.6" ry="4" fill="#f6cfb0"/>
<rect x="58.5" y="27.5" width="8.5" height="4" fill="#f890c0"/>
<rect x="58.5" y="30.5" width="8.5" height="2" fill="#90c8e0"/>
<path d="M57.5 32.5h10.5l1.7 10.5h-14z" fill="url(#dr2)"/>
<rect x="59.3" y="43" width="2" height="8" fill="#f6cfb0"/><rect x="63.5" y="43" width="2" height="8" fill="#f6cfb0"/>
<rect x="58.8" y="50.5" width="3" height="1.4" fill="#f070b0"/><rect x="63" y="50.5" width="3" height="1.4" fill="#f070b0"/>
<path d="M3.5 62l20-4l8 3l1 8h-27z" fill="#6aa090"/><path d="M5 58l19-3l7 3l-20 4z" fill="#f0f0ea"/><path d="M3.5 64h14v5h-14z" fill="#d89458"/>
<path d="M32 53h13v17h-13z" fill="#e8d9a0"/><rect x="34" y="55" width="9" height="10" fill="#b8d8f0"/>
<path d="M46 52l6-2l6 2v9h-12z" fill="#f0ece0"/><rect x="48" y="55" width="3" height="3" fill="#e0a060"/>
<path d="M28 51v-7" stroke="#8a6a40" stroke-width="1"/><ellipse cx="28" cy="45" rx="3" ry="2.5" fill="#c8a080"/>
<path d="M62 56c0-4 3-5 8-5s9 1 9 5v11h-17z" fill="#f4d050"/><rect x="65" y="53" width="9" height="5" fill="#f8f0d0"/>
<circle cx="65" cy="68" r="2.2" fill="#9a8050"/><circle cx="76" cy="68" r="2.2" fill="#9a8050"/>
<path d="M81.5 65l4-5l3 2l3-1v4z" fill="#80c860"/>
<circle cx="85" cy="43" r="2.2" fill="none" stroke="#c0c0c0" stroke-width="0.6"/>
</svg>
<div class="a tx" style="left:12.32px;top:262.88px;font-family:'Liberation Sans';font-size:15.36px;line-height:18px;color:#333;">3</div>
<svg class="a" style="left:0;top:266px" width="24" height="30"><polygon points="15.50,16.60 16.82,19.68 20.16,19.99 17.64,22.20 18.38,25.46 15.50,23.75 12.62,25.46 13.36,22.20 10.84,19.99 14.18,19.68" fill="#666"/><rect x="10" y="19" width="1.1" height="1" fill="#666"/><rect x="9.8" y="22.2" width="1.6" height="1" fill="#666"/></svg>
<div class="a" style="left:26px;top:266px;width:98px;height:74px;background:#fff;border:1px solid #c8c8c8"></div>
<svg class="a" style="left:27px;top:267px" width="96" height="72" viewBox="0 0 96 72">
<defs><linearGradient id="j3" x1="0" y1="0" x2="0" y2="1"><stop offset="0" stop-color="#2a6e20"/><stop offset=".5" stop-color="#4a9a30"/><stop offset="1" stop-color="#80c040"/></linearGradient></defs>
<rect x="0" y="0" width="96" height="72" fill="#fff"/>
<rect x="2" y="1" width="0.8" height="70" fill="#fbc0aa"/>
<rect x="92.5" y="1" width="2.4" height="70" fill="#fbb59c"/>
<text x="10" y="12.1" font-family="Liberation Serif" font-weight="bold" font-size="4.6" fill="#1a1a1a" textLength="73.5" lengthAdjust="spacingAndGlyphs">Hoạt động 1: Dạy hát "Em búp bê"</text>
<rect x="1.2" y="13" width="91.3" height="58" fill="url(#j3)"/>
<path d="M1.2 13h91.3v8c-10 2-20-1-30 1c-12 2-22-2-35 1c-10 2-18 0-26 1z" fill="#1e5a18"/>
<path d="M1.2 47c8-2 16-1 24 1v12h-24z" fill="#f0d888"/>
<path d="M70 45c8-3 15-2 22.5-1v16h-22.5z" fill="#e8d478"/>
<path d="M30 60c18-5 40-5 62.5-2v13h-62.5z" fill="#1e88e5"/>
<path d="M32 61c16-4 36-5 58-2" stroke="#48d0f0" stroke-width="1.6" fill="none"/>
<path d="M1.2 71c2-9 8-15 18-14c-5 2-8 7-8 14z" fill="#1a6a1a"/>
<path d="M8 71c5-8 14-12 36-8c-14 0-20 4-24 8z" fill="#2a8a2a"/>
<path d="M2 62c6-3 12-3 18 1c-6 0-12 1-18 4z" fill="#3aa03a"/>
<path d="M26 24.3l50 2.7l-2 36.3l-51.8-3.7z" fill="#f4f4ee"/>
<g fill="#7aa07a"><rect x="28" y="27" width="32" height="0.9" opacity=".8"/><rect x="28" y="31" width="40" height="1"/><rect x="28" y="35" width="40" height="1"/><rect x="28" y="39" width="40" height="1"/><rect x="28" y="43" width="40" height="1"/><rect x="28" y="47" width="40" height="1"/><rect x="28" y="51" width="40" height="1"/></g>
<ellipse cx="13" cy="34" rx="9" ry="11" fill="#e8b030"/>
<circle cx="10" cy="30" r="3" fill="#8a8a8a"/><circle cx="16.5" cy="30" r="3" fill="#8a8a8a"/><circle cx="13" cy="36" r="2.8" fill="#8a8a8a"/><circle cx="8" cy="40" r="2.5" fill="#8a8a8a"/><circle cx="19" cy="40" r="2.4" fill="#8a8a8a"/>
<ellipse cx="12.5" cy="37" rx="1.5" ry="1.2" fill="#b03aa0"/>
<path d="M3 49l7-10" stroke="#d8a030" stroke-width="2"/>
<ellipse cx="78" cy="62" rx="7" ry="9" fill="#f0b030"/><circle cx="76" cy="56" r="5.5" fill="#f4c040"/><ellipse cx="75" cy="58.5" rx="2.4" ry="1.8" fill="#d02a70"/>
<ellipse cx="86" cy="32" rx="5.5" ry="6" fill="#f0d8f0"/><circle cx="85" cy="31" r="2" fill="#c03aa0"/><circle cx="88" cy="35" r="1.6" fill="#c03aa0"/>
<ellipse cx="66" cy="22" rx="5" ry="4" fill="#f5d030"/><circle cx="67" cy="21" r="1.5" fill="#fff"/>
<path d="M72 17l4-1l1 8l-5 1z" fill="#b040c0"/>
<rect x="13" y="14" width="5" height="6.5" fill="#3a5aa0"/><rect x="46" y="14.5" width="5" height="6.5" fill="#3a5aa0"/><rect x="84.5" y="15" width="5" height="6.5" fill="#3a5aa0"/>
</svg>
<div class="a tx" style="left:12.56px;top:354.88px;font-family:'Liberation Sans';font-size:15.36px;line-height:18px;color:#333;">4</div>
<svg class="a" style="left:0;top:358px" width="24" height="30"><polygon points="15.50,16.60 16.82,19.68 20.16,19.99 17.64,22.20 18.38,25.46 15.50,23.75 12.62,25.46 13.36,22.20 10.84,19.99 14.18,19.68" fill="#666"/><rect x="10" y="19" width="1.1" height="1" fill="#666"/><rect x="9.8" y="22.2" width="1.6" height="1" fill="#666"/></svg>
<div class="a" style="left:26px;top:358px;width:98px;height:74px;background:#fff;border:1px solid #c8c8c8"></div>
<svg class="a" style="left:27px;top:359px" width="96" height="72" viewBox="0 0 96 72">
<defs><linearGradient id="p4" x1="0" y1="0" x2="1" y2="1"><stop offset="0" stop-color="#c09ad8"/><stop offset=".5" stop-color="#d4b4e2"/><stop offset="1" stop-color="#bc96d8"/></linearGradient></defs>
<rect x="0" y="0" width="96" height="72" fill="#fdf9ee"/>
<rect x="2" y="1" width="0.8" height="70" fill="#fbc8b0"/>
<rect x="92.5" y="1" width="2.3" height="70" fill="#fbc0a8"/>
<path d="M10 12c4-1 9 3 13 8c-4 1-8 0-11-3z" fill="#f0d090"/>
<path d="M12 8c5-1 9 2 11 7c-4 0-8-2-11-5z" fill="#88c8a8"/>
<path d="M2 16c6 1 10 5 13 12c-6-1-10-4-13-8z" fill="#f4d498"/>
<path d="M15 2c4 0 6 2 7 6c-3 0-6-2-7-4z" fill="#f0d090"/>
<circle cx="6.5" cy="7.5" r="4.2" fill="#f07a48"/><circle cx="6.5" cy="7.5" r="1.7" fill="#fde6c0"/>
<circle cx="7" cy="25" r="4.3" fill="#f06c40"/><circle cx="7" cy="25" r="1.6" fill="#fde6c0"/>
<path d="M16 6h30M20 10h24M22 3l8 5M34 3l6 6" stroke="#f8f0e8" stroke-width="0.6"/>
<g fill="#e8704a"><circle cx="19" cy="2.5" r="1.5"/><circle cx="26" cy="7" r="1.5"/><circle cx="33" cy="2.5" r="1.4"/><circle cx="37" cy="8" r="1.5"/><circle cx="30" cy="12" r="1.4"/><circle cx="43" cy="4" r="1.4"/><circle cx="22" cy="10" r="1.3"/><circle cx="40" cy="12" r="1.3"/><circle cx="45" cy="10" r="1.2"/></g>
<text x="40" y="11.3" font-family="Liberation Sans" font-weight="bold" font-size="3.8" fill="#f01818" textLength="54" lengthAdjust="spacingAndGlyphs">Bé Cô vừa hát nói về ai ?</text>
<rect x="18" y="14" width="56.8" height="47.7" fill="url(#p4)"/>
<ellipse cx="43" cy="27" rx="10.5" ry="10" fill="#8c4e30"/>
<path d="M33 30c-2 5-1 10 2 12l3-8z" fill="#e8a0b8"/>
<ellipse cx="45.5" cy="29.5" rx="5.6" ry="5.4" fill="#d8946e"/>
<circle cx="43.3" cy="29" r="0.8" fill="#3a2a2a"/><circle cx="47.8" cy="29" r="0.8" fill="#3a2a2a"/>
<rect x="41" y="34.5" width="9" height="4" fill="#b8c8e4"/>
<ellipse cx="45" cy="46" rx="12.5" ry="8.5" fill="#f0a6d6"/>
<path d="M36 40c4 2 14 2 19 0l-2 5h-15z" fill="#f8c0e0"/>
<ellipse cx="34" cy="55.5" rx="4.5" ry="3.6" fill="#eeb0bc"/><ellipse cx="53" cy="55" rx="4" ry="3.4" fill="#eeb0bc"/>
<ellipse cx="61" cy="46" rx="5.5" ry="4.5" fill="#f6d4ea"/>
<path d="M84 50c3-3 6-3 8-1c-2 3-5 3-8 1zM80 56c3-2 6-2 8 0c-3 2-6 2-8 0zM86 45c2-3 4-3 6-2c-2 2-4 3-6 2z" fill="#f0d090"/>
<path d="M75 62c4-6 9-6 13-4c-2 5-7 8-13 8z" fill="#88c8a0"/>
<circle cx="68.5" cy="66" r="4.3" fill="#f07848"/><circle cx="68.5" cy="66" r="1.6" fill="#fde0c0"/>
<circle cx="87" cy="65" r="5" fill="#c0d850"/><circle cx="81" cy="69" r="2.8" fill="#40a060"/>
</svg>
<div class="a tx" style="left:12.32px;top:446.88px;font-family:'Liberation Sans';font-size:15.36px;line-height:18px;color:#333;">5</div>
<div class="a" style="left:26px;top:450px;width:98px;height:74px;background:#fff;border:1px solid #c8c8c8"></div>
<svg class="a" style="left:27px;top:451px" width="96" height="72" viewBox="0 0 96 72">
<rect x="0" y="0" width="96" height="72" fill="#fff"/>
<rect x="2.3" y="1" width="92.5" height="70" fill="#48709a"/>
<path d="M8.3 6.5l20-0.8l30 0.6l30.7-0.6l-0.3 25l0.6 32.5l-30 0.6l-30-0.4l-20.7 0.3l-0.4-30z" fill="#fff"/>
<path d="M6 4l11-3l5 12l-10 7z" fill="#d8d8d0"/><path d="M7 7l6-1.5M8 10l6-1.5" stroke="#909090" stroke-width="0.4"/><path d="M6.5 1.5l6 10" stroke="#3aa0e0" stroke-width="1"/>
<path d="M73 6l10-3l-4 6z" fill="#f8b040"/><path d="M73 10l3-1l-1 2z" fill="#f8b040"/>
<path d="M80 25l9-10l-3 1l-8 8z" fill="#80c0e8"/><path d="M82 17l7-3l-5 6z" fill="#a8d8f0"/>
<text x="19.5" y="37.6" font-family="Liberation Serif" font-size="8.3" fill="#f02040" textLength="56" lengthAdjust="spacingAndGlyphs">Trẻ hát cùng cô</text>
<path d="M70 43.5l21-4.7v18.8l-21 3z" fill="#e8982c"/><path d="M72 44.6l17-3.8v15.4l-17 2.5z" fill="#3d6b50"/>
<rect x="74" y="56" width="3" height="1" fill="#f0f0f0"/><rect x="81" y="55" width="3" height="1.4" fill="#f0d040"/>
<rect x="78.5" y="60.5" width="2.6" height="7.5" fill="#8a4a22"/>
<ellipse cx="80" cy="68.5" rx="6.5" ry="1.2" fill="#705040"/>
<path d="M5 32h7.5v29h-7.5z" fill="#e8c8a0"/><rect x="5" y="38" width="7.5" height="2" fill="#a0c8e8"/><rect x="5" y="46" width="7.5" height="2" fill="#f0a0a0"/><circle cx="9" cy="31" r="1.8" fill="#e84030"/>
<circle cx="14" cy="45.5" r="2.2" fill="#f0c8a8"/><path d="M13 43.5c0-2 2-3 3-2" stroke="#604030" stroke-width="1.2" fill="none"/><rect x="12" y="47.5" width="4.5" height="10" fill="#3a70b0"/><rect x="12.5" y="57" width="3" height="8" fill="#505a6a"/>
<circle cx="21.8" cy="53" r="2.2" fill="#f0c8a8"/><path d="M19.5 51.5h5l1-1.5h-6z" fill="#3a98c8"/><rect x="19.5" y="55" width="4.5" height="9" fill="#a070c0"/><path d="M17.5 60h7v7h-7z" fill="#e8903a"/>
<circle cx="31" cy="47.5" r="1.8" fill="#f0c8a8"/><rect x="29.8" y="49.5" width="3" height="6" fill="#30a0f0"/><path d="M28 49l-2-3M34 49l2-3" stroke="#f0c8a8" stroke-width="0.7"/>
<circle cx="45.5" cy="50" r="2.4" fill="#f0c8a8"/><path d="M43 49c0-3 5-3 5 0" fill="#d08040"/><rect x="44" y="52" width="3.5" height="4.5" fill="#f0a0c0"/>
<circle cx="58" cy="49.5" r="2.4" fill="#f0c8a8"/><path d="M55.5 48.5c0-3 5-3 5 0" fill="#d05040"/><rect x="56.5" y="52" width="4" height="5" fill="#e05a5a"/><rect x="60" y="52" width="3" height="4" fill="#e04050"/>
<rect x="33" y="55.5" width="9" height="4.5" fill="#f0d8a0"/><rect x="45" y="55.5" width="9" height="4.5" fill="#f0d8a0"/><rect x="57" y="55.5" width="9" height="4.5" fill="#f0d8a0"/>
<path d="M34 60v9M41 60v9M46 60v9M53 60v9M58 60v9M65 60v9" stroke="#606060" stroke-width="0.6"/>
</svg>
<div class="a tx" style="left:12.08px;top:538.88px;font-family:'Liberation Sans';font-size:15.36px;line-height:18px;color:#333;">6</div>
<svg class="a" style="left:0;top:542px" width="24" height="30"><polygon points="15.50,16.60 16.82,19.68 20.16,19.99 17.64,22.20 18.38,25.46 15.50,23.75 12.62,25.46 13.36,22.20 10.84,19.99 14.18,19.68" fill="#666"/><rect x="10" y="19" width="1.1" height="1" fill="#666"/><rect x="9.8" y="22.2" width="1.6" height="1" fill="#666"/></svg>
<div class="a" style="left:26px;top:542px;width:98px;height:74px;background:#fff;border:1px solid #c8c8c8"></div>
<svg class="a" style="left:27px;top:543px" width="96" height="72" viewBox="0 0 96 72">
<defs><linearGradient id="s6" x1="0" y1="0" x2="0" y2="1"><stop offset="0" stop-color="#b0cce0"/><stop offset=".5" stop-color="#d8e8e8"/><stop offset="1" stop-color="#eef4e0"/></linearGradient>
<radialGradient id="r6" cx=".45" cy=".35" r=".7"><stop offset="0" stop-color="#ff6a3a"/><stop offset=".6" stop-color="#ee2a10"/><stop offset="1" stop-color="#b80a08"/></radialGradient>
<linearGradient id="pk6" x1="0" y1="0" x2="1" y2="1"><stop offset="0" stop-color="#f890c8"/><stop offset="1" stop-color="#e8308a"/></linearGradient></defs>
<rect x="0" y="0" width="96" height="72" fill="#fff"/>
<rect x="1" y="1" width="93" height="70" fill="url(#s6)"/>
<rect x="1" y="1" width="93" height="12" fill="#4a6f94"/>
<path d="M5 7.6h84v5h-84z" fill="#fff"/>
<path d="M3.5 3l3.5 10" stroke="#3aa0d8" stroke-width="1"/>
<path d="M6 9c2-1 5-1 7 1l-1 2.5h-6z" fill="#c8c8c8"/>
<text x="18" y="11.8" font-family="Liberation Serif" font-weight="bold" font-size="4.6" fill="#e81818" textLength="39.4" lengthAdjust="spacingAndGlyphs">Bài hát : Búp bê</text>
<path d="M72 7l11-3l-5 8z" fill="#f8b040"/><path d="M72 11l4-1.5l-1 3z" fill="#f8b040"/>
<path d="M1 15c12-1 22 3 31 11c-10-4-21-6-31-6z" fill="#2e9a4a"/>
<path d="M1 22c10 0 16 3 21 9c-7-3-14-4-21-4z" fill="#3aaa50"/>
<path d="M1 29c7 0 12 3 15 5c-5-1-10-2-15-1z" fill="#2e9a4a"/>
<ellipse cx="40" cy="25" rx="6.5" ry="3.5" fill="#fff"/><ellipse cx="77" cy="26" rx="14" ry="7" fill="#fff"/><ellipse cx="70" cy="24" rx="6" ry="5" fill="#fff"/><ellipse cx="57" cy="39" rx="8" ry="4" fill="#fff"/>
<path d="M44 24l1 2l2 0l-1.5 1l0.5 2l-2-1l-2 1l0.5-2l-1.5-1l2 0z" fill="#f0d040"/>
<path d="M48 20l1 2l2 0l-1.5 1l0.5 2l-2-1l-2 1l0.5-2l-1.5-1l2 0z" fill="#f0d040"/>
<circle cx="30" cy="37" r="6.5" fill="#a8582a"/><circle cx="35" cy="40" r="5.5" fill="#f8d0b8"/>
<path d="M10 46c8-7 30-7 44-2c0 15-9 25-22 25c-13 0-22-9-22-23z" fill="url(#r6)"/>
<path d="M23 47v20M33 45v23M42 46v20" stroke="#c01808" stroke-width="0.6" opacity=".6"/>
<path d="M32 43h12l-2 6h-10z" fill="#3a9a70"/>
<path d="M1 39c6 0 10 8 10 16c0 8-4 13-10 14z" fill="#f8c020"/>
<path d="M1 47c3 0 5 5 5 10s-2 10-5 11z" fill="#f0a010"/>
<path d="M52 71c-1-12 5-19 15-19c10 0 15 6 15 19z" fill="url(#pk6)"/>
<path d="M63 50c2-7 10-9 18-8c8 1 12 6 12 12c0 7-4 10-9 10c-9 0-17-4-21-14z" fill="#f26a22"/>
<path d="M72 46c3-2 8-2 10 1c-2 2-7 3-10-1z" fill="#f8c0a0"/>
<path d="M78 56c3 2 8 3 14 2l-1 5c-5 1-10 0-13-7z" fill="#d83010"/>
<path d="M43 71l4-13l3 13zM50 71l2-9l2 9zM80 71l5-19l2 19zM86 71l4-14l3 14z" fill="#3aaa40"/>
</svg>
<div class="a tx" style="left:12.08px;top:630.88px;font-family:'Liberation Sans';font-size:15.36px;line-height:18px;color:#333;">7</div>
<svg class="a" style="left:0;top:634px" width="24" height="30"><polygon points="15.50,16.60 16.82,19.68 20.16,19.99 17.64,22.20 18.38,25.46 15.50,23.75 12.62,25.46 13.36,22.20 10.84,19.99 14.18,19.68" fill="#666"/><rect x="10" y="19" width="1.1" height="1" fill="#666"/><rect x="9.8" y="22.2" width="1.6" height="1" fill="#666"/></svg>
<div class="a" style="left:26px;top:634px;width:98px;height:74px;background:#fff;border:1px solid #c8c8c8"></div>
<svg class="a" style="left:27px;top:635px" width="96" height="72" viewBox="0 0 96 72">
<defs><linearGradient id="y7" x1="0" y1="0" x2="0" y2="1"><stop offset="0" stop-color="#f8d888"/><stop offset=".5" stop-color="#fbe8b8"/><stop offset="1" stop-color="#f0ecd0"/></linearGradient></defs>
<rect x="0" y="0" width="96" height="72" fill="#fff"/>
<rect x="1.2" y="1" width="89.8" height="71" fill="url(#y7)"/>
<path d="M30 40l-25-38h10zM45 40l5-38h10zM55 40l30-38h6z" fill="#fff4d8" opacity=".5"/>
<rect x="91" y="1" width="3.8" height="71" fill="#fbae90"/><rect x="92" y="1" width="1" height="71" fill="#fff" opacity=".6"/>
<text x="16.3" y="5.8" font-family="Liberation Serif" font-style="italic" font-weight="bold" font-size="3.4" fill="#202020" textLength="38.5" lengthAdjust="spacingAndGlyphs">Vận động minh họa</text>
<text x="5" y="15.5" font-family="Liberation Sans" font-weight="bold" font-size="10" fill="#e82050" textLength="63" lengthAdjust="spacingAndGlyphs" stroke="#e82050" stroke-width="0.9">KÉO CƯA LỪA XẺ</text>
<ellipse cx="74.5" cy="8.5" rx="6" ry="2.2" fill="#f0f0f8"/><ellipse cx="57" cy="20" rx="8" ry="1.8" fill="#e8e0f0"/>
<ellipse cx="14" cy="37" rx="12" ry="6" fill="#d4ecf8"/><ellipse cx="53" cy="36" rx="18" ry="7" fill="#d4ecf8"/>
<rect x="1.2" y="40" width="89.8" height="32" fill="#80c45a"/>
<path d="M1.2 52c30-3 60-3 89.8 0v20h-89.8z" fill="#70b84a"/>
<ellipse cx="81" cy="27" rx="10" ry="16" fill="#6aae6a"/><ellipse cx="75" cy="31" rx="5" ry="11" fill="#7cbc7c"/>
<path d="M82 35v23M82 46l-4-5" stroke="#8a5a2a" stroke-width="1.6"/>
<path d="M16 33c-2-6 1-9 5-10c5-1 8 2 8 6z" fill="#e8c040"/>
<path d="M15 35c0-4 3-6 7-6c4 0 7 2 7 5l-2 3h-10z" fill="#b84a1a"/>
<ellipse cx="22" cy="38" rx="6" ry="5.5" fill="#f8c8a0"/>
<path d="M4.6 59c1-9 6-16 16-17l11 1l1 6l-12 3c-4 2-9 5-12 8z" fill="#f26a1e"/>
<path d="M6 66c3-8 8-12 16-13l6 2l-1 11z" fill="#2a8a30"/>
<path d="M36 30c0-7 6-10 11-9c5 1 8 6 7 12l-2 6h-14z" fill="#f8d030"/>
<ellipse cx="44" cy="37" rx="5.5" ry="5" fill="#fbd4b8"/>
<path d="M35 42h11l2 21h-13z" fill="#4a7ad0"/>
<path d="M23 66c1-7 6-12 14-13l4 4l-1 9z" fill="#8a38a8"/>
<path d="M57 55h7l-1 9h-5zM67 53h9l-1 11h-7zM79 57h5l-1 6h-3z" fill="#6a3020"/>
<path d="M61 55v-6M71 53v-10M81.5 57v-4" stroke="#3a8a30" stroke-width="0.7"/>
<circle cx="63" cy="46" r="2.5" fill="#f05a20"/><circle cx="74" cy="40" r="3" fill="#f8e020"/><circle cx="74" cy="40" r="1.2" fill="#d03020"/><circle cx="84" cy="51" r="1.8" fill="#f8d020"/>
</svg>
<div class="a" style="left:0px;top:706px;width:1024px;height:22px;background:#f0f0f0;border-top:1px solid #c4c4c4"></div>
<div class="a" style="left:675px;top:707px;width:38px;height:21px;background:#c8c8c8;"></div>
<div class="a tx" style="left:7.04px;top:710.06px;font-family:'Liberation Sans';font-size:11.38px;line-height:14px;color:#444;transform:scaleX(1.0087);transform-origin:0 0;">Slide 1 of 8</div>
<div class="a tx" style="left:534.49px;top:709.86px;font-family:'Liberation Sans';font-size:11.95px;line-height:14px;color:#444;transform:scaleX(0.9732);transform-origin:0 0;">Notes</div>
<div class="a tx" style="left:602.18px;top:709.86px;font-family:'Liberation Sans';font-size:11.95px;line-height:14px;color:#444;transform:scaleX(0.9327);transform-origin:0 0;">Comments</div>
<div class="a tx" style="left:968.66px;top:710.06px;font-family:'Liberation Sans';font-size:11.38px;line-height:14px;color:#444;transform:scaleX(0.9512);transform-origin:0 0;">80%</div>
<svg class="a" style="left:0;top:706px" width="1024" height="22">
<g fill="none" stroke="#666" stroke-width="1">
 <path d="M84.5 4.5v11h5.5l2 1.8 2-1.8h3.5v-2"/>
 <path d="M84.5 4.5h5c1.3 0 2.5 0.8 2.5 2v9"/>
 <path d="M92 6.5c0-1.2 1.2-2 2.5-2h3"/>
</g>
<path d="M93.6 6.6l3.8 5.6M97.4 6.6l-3.8 5.6" stroke="#555" stroke-width="1.4"/>
<path d="M519 10.5h11M519 13h11M520.5 15.5h8" stroke="#666" stroke-width="1"/>
<path d="M522 8.5h5l-2.5-3z" fill="#666"/>
<path d="M586 5.5h12v8h-6.5l-2.8 3v-3h-2.7z" fill="#666"/>
<g fill="none" stroke="#666" stroke-width="1.2">
 <rect x="687.6" y="4.6" width="12.8" height="12.2"/>
 <path d="M690.6 4.6v12.2M690.6 13.6h9.8"/>
 <rect x="692.8" y="7.4" width="5" height="3"/>
 <rect x="725.6" y="4.6" width="5" height="4.6"/><rect x="733.6" y="4.6" width="5" height="4.6"/>
 <rect x="725.6" y="12" width="5" height="4.6"/><rect x="733.6" y="12" width="5" height="4.6"/>
 <path d="M763.5 5.2h4.8c0.8 0 1.2 0.6 1.2 1.2v10.4c0-0.6-0.4-1.2-1.2-1.2h-4.8z"/>
 <path d="M775.5 5.2h-4.8c-0.8 0-1.2 0.6-1.2 1.2v10.4c0-0.6 0.4-1.2 1.2-1.2h4.8z"/>
 <path d="M765 8h3M765 10.5h3M765 13h3M771 8h3M771 10.5h3M771 13h3"/>
 <path d="M802.5 7v4.5h10.5V7M806.3 11.5v4.5M804 16.5h5M803 9.3h7"/>
</g>
<rect x="801" y="5" width="13" height="2" fill="#666"/>
<rect x="832" y="10" width="6.3" height="1.6" fill="#555"/>
<rect x="842.3" y="10.2" width="99.2" height="1" fill="#a8a8a8"/>
<rect x="892" y="7.5" width="1" height="6" fill="#a8a8a8"/>
<rect x="880" y="5" width="4.2" height="11" fill="#555"/>
<path d="M946 10.8h8M950 6.8v8" stroke="#555" stroke-width="1.8"/>
<rect x="1004.2" y="5.2" width="12.2" height="12.2" fill="none" stroke="#666" stroke-width="1"/>
<path d="M1010.3 7v3M1010.3 12.5v3M1006 11.3h3M1011.6 11.3h3" stroke="#666" stroke-width="0.9"/>
<path d="M1008.8 8.2l1.5-1.8 1.5 1.8zM1008.8 14.3l1.5 1.8 1.5-1.8zM1007.4 9.8l-1.8 1.5 1.8 1.5zM1013.2 9.8l1.8 1.5-1.8 1.5z" fill="#666"/>
</svg>
<div class="a" style="left:0px;top:728px;width:1024px;height:40px;background:linear-gradient(90deg,#3a4030 0px,#3a4030 340px,#3c3b2e 600px,#3d3a2e 1024px);"></div>
<div class="a" style="left:0px;top:728px;width:48px;height:40px;background:#203230;"></div>
<div class="a" style="left:48px;top:728px;width:288px;height:40px;background:#f0f0f0;border-top:1px solid #c9c9c9"></div>
<div class="a tx" style="left:88.52px;top:739.52px;font-family:'Liberation Sans';font-size:14.65px;line-height:18px;color:#1e1e1e;transform:scaleX(0.9878);transform-origin:0 0;">Type here to search</div>
<div class="a tx" style="left:834.09px;top:739.57px;font-family:'Liberation Sans';font-size:14.22px;line-height:17px;color:#fff;transform:scaleX(0.9241);transform-origin:0 0;">30°C</div>
<div class="a tx" style="left:914.27px;top:731.07px;font-family:'Liberation Sans';font-size:13.08px;line-height:16px;color:#fff;transform:scaleX(0.8962);transform-origin:0 0;">11:09 PM</div>
<div class="a tx" style="left:912.24px;top:748.67px;font-family:'Liberation Sans';font-size:13.65px;line-height:16px;color:#fff;transform:scaleX(0.8733);transform-origin:0 0;">9/10/2025</div>
<svg class="a" style="left:0;top:728px" width="1024" height="40">
<path d="M15.6 13.2l7.2-1v7.2h-7.2zM23.8 12.1l8.2-1.2v8.5h-8.2zM15.6 20.4h7.2v7.2l-7.2-1zM23.8 20.4h8.2v8.5l-8.2-1.2z" fill="#fff"/>
<circle cx="70.2" cy="16.6" r="4.6" fill="none" stroke="#222" stroke-width="1.3"/>
<path d="M66.8 20l-6.4 6.3" stroke="#222" stroke-width="1.4"/>
<defs><linearGradient id="spk" x1="0" y1="0" x2="0" y2="1"><stop offset="0" stop-color="#ffd94a"/><stop offset="1" stop-color="#f5a30c"/></linearGradient></defs>
<path d="M288.2 7.699999999999999Q290.8 16.4 299.5 19Q290.8 21.6 288.2 30.3Q285.59999999999997 21.6 276.9 19Q285.59999999999997 16.4 288.2 7.699999999999999z" fill="url(#spk)"/>
<path d="M311.1 18.1Q312.40000000000003 22.2 316.5 23.5Q312.40000000000003 24.8 311.1 28.9Q309.8 24.8 305.70000000000005 23.5Q309.8 22.2 311.1 18.1z" fill="url(#spk)"/>
<path d="M269 23.8Q270.0 27.0 273.2 28Q270.0 29.0 269 32.2Q268.0 29.0 264.8 28Q268.0 27.0 269 23.8z" fill="#1e9be9"/>
<circle cx="304.7" cy="9.8" r="1.9" fill="#f15a24"/>
<circle cx="323" cy="29.4" r="1.8" fill="#7cc242"/>
<g fill="none" stroke="#fff" stroke-width="1.2">
 <path d="M352.5 11.8v2.3h10v-2.3"/>
 <rect x="352.5" y="16.7" width="10" height="5.5"/>
 <path d="M352.5 27v-2.3h10v2.3"/>
 <path d="M366.5 11.8v2.4M366.5 20.4v6.6"/>
</g>
<rect x="364.9" y="16" width="3.2" height="2.9" fill="#fff"/>
<path d="M394.8 12.2h8l1.5 1.5h12.7v14.6h-22.2z" fill="#f8c84a"/>
<path d="M394.8 11.5h7.2l1.2 2.2h-8.4z" fill="#e9a825"/>
<path d="M400 21.5h12v7h-3.3v-3.6h-5.4v3.6h-3.3z" fill="#3e97e0"/>
<rect x="391" y="38" width="22" height="2" fill="#7cbcf0"/><rect x="413.5" y="38" width="7.5" height="2" fill="#5a8cc0"/>
<path d="M440 13.5l8-5.2 9.3 5.5v14.7h-17.3z" fill="#29a8e0"/>
<path d="M447 20l10.3-6.2v8.6z" fill="#0d63b8"/>
<path d="M440 21.2l9 6.8h8.3v1.5h-17.3z" fill="#42c3ee"/>
<rect x="433.2" y="13.6" width="12.5" height="12.5" rx="1" fill="#0a65c1"/>
<ellipse cx="439.5" cy="19.9" rx="3.3" ry="3.6" fill="none" stroke="#fff" stroke-width="1.6"/>
<defs>
<linearGradient id="cp1" x1="0" y1="0" x2="1" y2="1"><stop offset="0" stop-color="#3cb8f0"/><stop offset=".5" stop-color="#5ec26a"/><stop offset="1" stop-color="#f5c242"/></linearGradient>
<linearGradient id="cp2" x1="0" y1="0" x2="1" y2="1"><stop offset="0" stop-color="#8a5cf0"/><stop offset=".5" stop-color="#e85aa8"/><stop offset="1" stop-color="#f7733a"/></linearGradient>
<linearGradient id="ed1" x1="0" y1="0" x2="1" y2="1"><stop offset="0" stop-color="#36c6f0"/><stop offset=".6" stop-color="#43c86a"/><stop offset="1" stop-color="#1b9de8"/></linearGradient>
</defs>
<defs>
<linearGradient id="cpl" x1="1" y1="0" x2="0" y2="1"><stop offset="0" stop-color="#1a4fd8"/><stop offset=".35" stop-color="#20a8f0"/><stop offset=".7" stop-color="#60c060"/><stop offset="1" stop-color="#f8d020"/></linearGradient>
<linearGradient id="cpr" x1="0.8" y1="0" x2="0.2" y2="1"><stop offset="0" stop-color="#b050f0"/><stop offset=".5" stop-color="#f060a0"/><stop offset="1" stop-color="#f8a040"/></linearGradient>
<linearGradient id="edg" x1="0" y1="0" x2="1" y2="0.6"><stop offset="0" stop-color="#2a9be8"/><stop offset=".5" stop-color="#32bde0"/><stop offset="1" stop-color="#62da52"/></linearGradient>
</defs>
<path d="M478.5 10h9.5c1.4 0 2 1 1.6 2.2l-4.6 11.8c-0.4 0.9-1.2 1.4-2.1 1.4h-8.4c-1.4 0-2-1-1.6-2.2l4.4-11.8c0.3-0.9 0.9-1.4 1.2-1.4z" fill="url(#cpl)"/>
<path d="M484.8 15h9c1.4 0 2 1 1.6 2.2l-4.6 11.6c-0.4 0.9-1.2 1.4-2.1 1.4h-8.4c-1.4 0-2-1-1.6-2.2l4.5-11.6c0.3-0.9 0.9-1.4 1.6-1.4z" fill="url(#cpr)"/>
<circle cx="523" cy="20" r="12" fill="url(#edg)"/>
<path d="M511 21c0-5 4-7.5 8-7.5c5 0 7.5 3 7.5 5.5c0 1.2-0.5 1.8-1 2.2c-1.5 1.3-0.5 3 1.5 3.8c3 1.2 6.5 0.3 8-1.2c-1 6.5-6.5 8.2-12 8.2c-7 0-12-5-12-11z" fill="#1a7ad4"/>
<path d="M518 19c-3 3-2.5 9 2 11.5c4.5 2.4 10 1.5 13.5-3c-3 3-10 3.8-13 0.5c-2-2.2-2.5-6-2.5-9z" fill="#0e58b0"/>
<ellipse cx="522.6" cy="20.2" rx="3" ry="2.8" fill="#3c3a2e"/>
<path d="M552 13.5h20c1 0 1.6 0.7 1.6 1.6v13c0 1-0.7 1.7-1.7 1.7h-19.9c-1 0-1.6-0.7-1.6-1.6v-13c0-1 0.6-1.7 1.6-1.7z" fill="#f5f5f5"/>
<path d="M556.5 13.5v-3.5c0-0.6 0.4-1 1-1h9c0.6 0 1 0.4 1 1v3.5" fill="none" stroke="#29a9e8" stroke-width="1.6"/>
<rect x="557.5" y="17.5" width="4" height="4" fill="#f25022"/><rect x="562.4" y="17.5" width="4" height="4" fill="#7fba00"/>
<rect x="557.5" y="22.4" width="4" height="4" fill="#00a4ef"/><rect x="562.4" y="22.4" width="4" height="4" fill="#ffb900"/>
<rect x="589" y="11.5" width="23.5" height="16.5" rx="4.5" fill="#ff0000"/>
<path d="M598.2 15.6v8.4l7-4.2z" fill="#fff"/>
<defs><linearGradient id="cc" x1="0" y1="0" x2="1" y2="0.3"><stop offset="0" stop-color="#9ccc3a"/><stop offset="1" stop-color="#38a852"/></linearGradient>
<linearGradient id="key" x1="0" y1="0" x2="0" y2="1"><stop offset="0" stop-color="#f4f4f4"/><stop offset="1" stop-color="#d6d6d6"/></linearGradient></defs>
<circle cx="639.8" cy="19.8" r="12.3" fill="#f4f4f4"/>
<circle cx="639.8" cy="19.8" r="11.4" fill="url(#cc)"/>
<path d="M640.3 19.5L640 7L652.5 7.2L652 19z" fill="#3d3a2e"/>
<path d="M640.2 8.2l12.2-1l-0.8 1.6z" fill="#f4f4f4"/>
<path d="M642 9.2l-0.9 4.3" stroke="#f05a28" stroke-width="1.5"/>
<path d="M643.3 14.6l6.4-5.8l-2.4-0.4l-5.2 5.3z" fill="#4cb04a"/>
<path d="M644.6 17.4l5-2.2" stroke="#f05a28" stroke-width="1.6"/>
<circle cx="639.8" cy="19.8" r="4.2" fill="#58b448" stroke="#f4f4f4" stroke-width="1.3"/>
<g fill="url(#key)"><rect x="667.6" y="11" width="10.6" height="10.6" rx="1.6"/><rect x="679.6" y="11" width="10.5" height="10.6" rx="1.6"/><rect x="673.2" y="19.5" width="11.3" height="10.5" rx="1.6"/></g>
<path d="M670.8 14.3v3.2c0 1.3 2.8 1.3 2.8 0v-3.2" stroke="#e02838" stroke-width="1.3" fill="none"/>
<path d="M685.2 13.6v4.4" stroke="#e02838" stroke-width="1.4"/>
<path d="M676.8 27.3v-4.2m0 1.2c0.4-1.4 3.2-1.4 3.2 0.2v3" stroke="#e02838" stroke-width="1.3" fill="none"/>
<path d="M718.3 19.8L708.25 14A11.6 11.6 0 0 1 728.35 14z" fill="#e34133"/>
<path d="M718.3 19.8L728.35 14A11.6 11.6 0 0 1 718.3 31.4z" fill="#fbc02d"/>
<path d="M718.3 19.8L718.3 31.4A11.6 11.6 0 0 1 708.25 14z" fill="#1fa463"/>
<circle cx="718.3" cy="19.8" r="5.3" fill="#fff"/>
<circle cx="718.3" cy="19.8" r="4.2" fill="#3b7de8"/>
<clipPath id="avc"><circle cx="724.3" cy="25.8" r="7.4"/></clipPath>
<g clip-path="url(#avc)"><rect x="716" y="17" width="17" height="17" fill="#7a7620"/>
<circle cx="720.3" cy="25" r="2.3" fill="#e6dfa8"/><circle cx="727.8" cy="22.4" r="1.9" fill="#dcd6a0"/>
<path d="M716 30h17v4h-17z" fill="#c2187a"/><circle cx="721" cy="29.5" r="1.2" fill="#e02090"/><circle cx="726" cy="30" r="1.3" fill="#e02090"/></g>
<rect x="703" y="38" width="30" height="2" fill="#7cb8e8"/>
<rect x="742" y="38" width="30" height="2" fill="#7cb8e8"/>
<rect x="758" y="11.7" width="10" height="16.2" fill="#fff"/>
<path d="M761 13.8a3 3 0 1 0 3 3h-3z" fill="#d24726"/><path d="M761.8 13a3 3 0 0 1 3 3h-3z" fill="#d24726"/>
<rect x="760" y="21.5" width="6.5" height="1" fill="#d24726"/><rect x="760" y="23.8" width="6.5" height="1" fill="#d24726"/>
<path d="M746 10.5l12.7-1.8v22.6l-12.7-1.9z" fill="#d24726"/>
<path d="M749.6 24v-9h3.2a2.6 2.6 0 0 1 0 5.2h-3.2" stroke="#fff" stroke-width="1.9" fill="none"/>
<defs><linearGradient id="cld" x1="0" y1="0" x2="0" y2="1"><stop offset="0" stop-color="#a8cdf8"/><stop offset=".7" stop-color="#b2d2f8"/><stop offset="1" stop-color="#7eacee"/></linearGradient></defs>
<circle cx="822" cy="21" r="3" fill="#f08a20"/>
<g fill="url(#cld)"><circle cx="807.5" cy="25.6" r="5.2"/><circle cx="812.8" cy="21.6" r="6"/><circle cx="820.6" cy="25.3" r="5.6"/><rect x="807.5" y="23" width="13" height="7.9"/></g>
<circle cx="820.1" cy="13.7" r="5.9" fill="#d4271e"/>
<path d="M818.4 11.6c0.5-1.3 3.4-1.2 3.4 0.5c0 1.3-3.4 3.2-3.4 4.4h3.6" stroke="#fff" stroke-width="1.2" fill="none"/>
<path d="M889.5 23.3l5.8-5.8 5.8 5.8" stroke="#fff" stroke-width="1.3" fill="none"/>
<path d="M983 11.7h16.2v13.2h-9.2l3 3.2l-6.5-3.2h-3.5z" fill="#fff"/>
<path d="M986 15.5h10M986 18.4h10M986 21.5h6.5" stroke="#3d3a2e" stroke-width="1.1"/>
<circle cx="998.5" cy="27" r="7.4" fill="#333" stroke="#8c8c8c" stroke-width="1"/>
<path d="M995.8 24.2l2.9-2v8.6" stroke="#fff" stroke-width="1.7" fill="none"/>
<rect x="1019" y="0" width="1" height="40" fill="#6a6a62"/>
</svg>
</body></html>
